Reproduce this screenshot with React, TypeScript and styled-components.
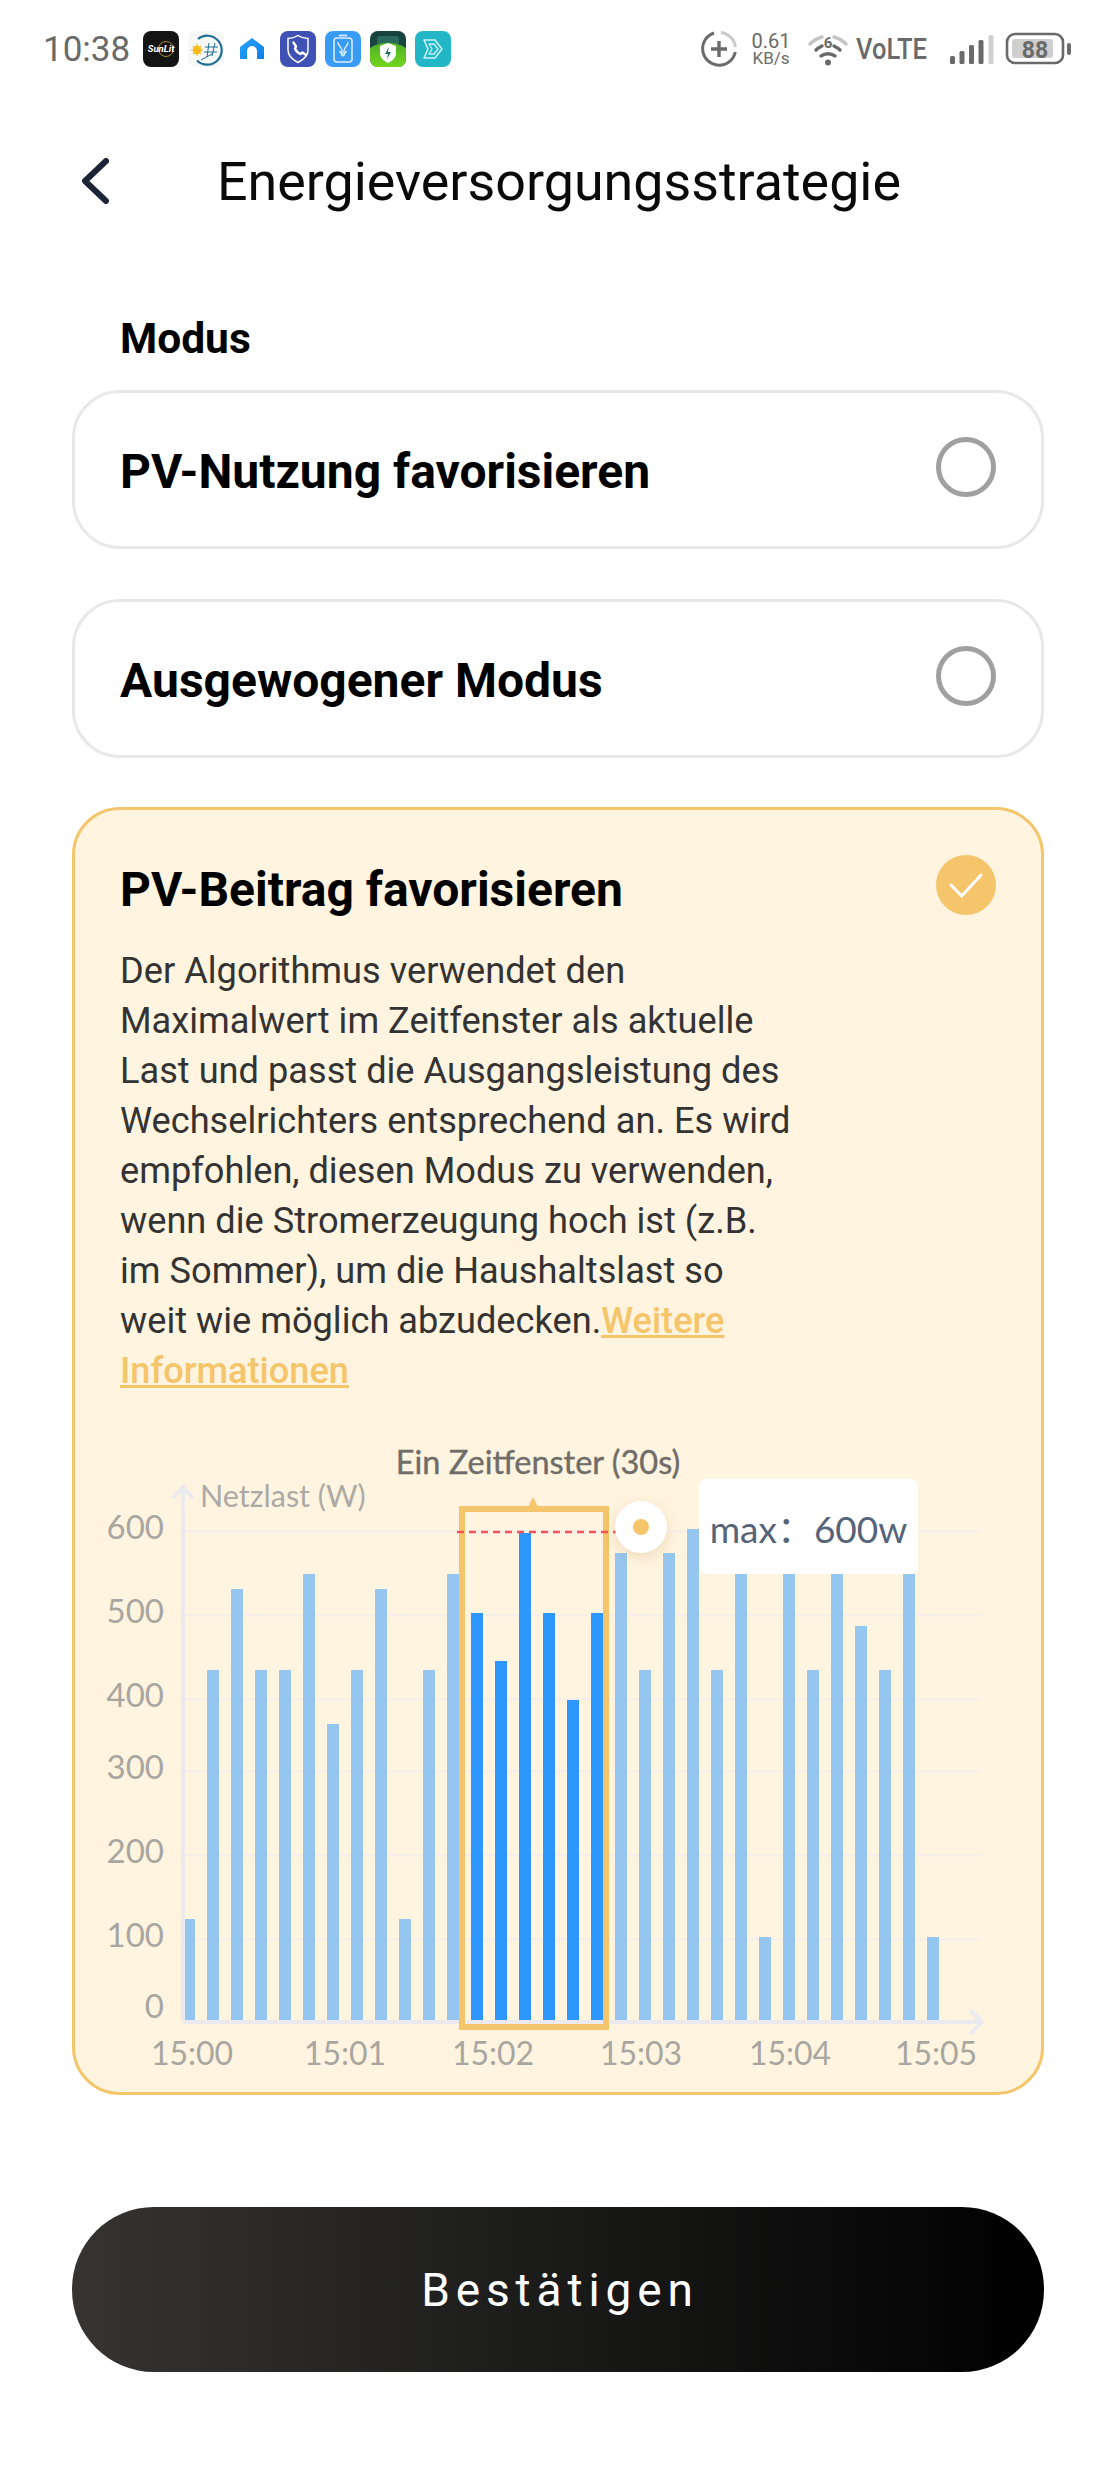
import React from 'react';
import styled, { createGlobalStyle } from 'styled-components';

const GlobalStyle = createGlobalStyle`
  html, body {
    margin: 0;
    padding: 0;
    background: #fff;
    font-family: Roboto, "Liberation Sans", sans-serif;
  }
`

const Page = styled.div`
  width: 1116px;
  height: 2480px;
  background: #fff;
  overflow: hidden;
`

const StatusBar = styled.div`
  display: flex;
  align-items: center;
  justify-content: space-between;
  height: 98px;
  padding: 0 45px 0 43px;
  color: #6a6a6a;
`

const StatusGroup = styled.div`
  display: flex;
  align-items: center;
`

const Clock = styled.span`
  font-size: 35px;
  width: 100px;
`

const AppIcons = styled.div`
  display: flex;
  align-items: center;
  gap: 9px;
`

const NetSpeed = styled.div`
  display: flex;
  flex-direction: column;
  align-items: center;
  width: 40px;
  margin: 0 17px 0 13px;
  font-size: 20px;
  line-height: 18px;
  & small {
    font-size: 17px;
    line-height: 17px;
  }
`

const Volte = styled.span`
  font-size: 29px;
  font-weight: 500;
  margin: 0 24px 0 8px;
  transform: scaleX(.88);
  transform-origin: left center;
  width: 70px;
`

const BatterySlot = styled.div`
  display: flex;
  margin-left: 11px;
`

const Header = styled.div`
  display: flex;
  align-items: center;
  height: 86px;
  padding: 0 0 0 81px;
  margin: 40px 0 90px;
`

const HeaderTitle = styled.h1`
  margin: 0 0 0 108px;
  font-size: 53.8px;
  font-weight: 400;
  color: #0a0a0a;
`

const Section = styled.div`
  display: flex;
  flex-direction: column;
  width: 972px;
  margin-left: 72px;
`

const SectionLabel = styled.div`
  margin: 0 0 26px 48px;
  font-size: 42.5px;
  line-height: 50px;
  font-weight: 700;
  color: #000;
`

const Card = styled.div<{ $active?: boolean }>`
  box-sizing: border-box;
  display: flex;
  flex-direction: column;
  border: 3px solid ${props => props.$active ? '#f5c56b' : '#e8e8e8'};
  border-radius: 48px;
  background: ${props => props.$active ? '#fff4df' : '#fff'};
  margin-bottom: 49.5px;
  padding: 0 45px;
  min-height: 159px;
  ${props => props.$active && 'height: 1288px; margin-bottom: 112px;'}
`

const CardHead = styled.div<{ $active?: boolean }>`
  display: flex;
  flex-shrink: 0;
  align-items: center;
  justify-content: space-between;
  height: ${props => props.$active ? '155px' : '153px'};
  & > span {
    font-size: 48px;
    font-weight: 700;
    color: #000;
    padding-top: 4px;
  }
`

const Radio = styled.div`
  box-sizing: border-box;
  width: 60px;
  height: 60px;
  margin-bottom: 5px;
  border: 5px solid #a0a0a0;
  border-radius: 50%;
`

const CheckSvg = styled.svg`
  margin-bottom: 5px;
`

const Description = styled.p`
  flex-shrink: 0;
  margin: -19px 0 0 0;
  font-size: 36.2px;
  line-height: 50px;
  color: #333;
  & a {
    color: #f5c56b;
    font-weight: 500;
    text-decoration: underline;
  }
`

const ChartWrap = styled.div`
  position: relative;
  flex-shrink: 0;
  width: 972px;
  height: 652px;
  margin: 44px 0 0 -48px;
`

const Tooltip = styled.div`
  position: absolute;
  left: 627px;
  top: 39px;
  box-sizing: border-box;
  width: 219px;
  height: 95px;
  display: flex;
  align-items: center;
  justify-content: center;
  background: #fff;
  border-radius: 8px;
  font-family: Lato, "Noto Sans CJK SC", sans-serif;
  font-size: 37px;
  color: #56647a;
  white-space: pre;
`

const Marker = styled.div`
  position: absolute;
  left: 543px;
  top: 61px;
  width: 52px;
  height: 52px;
  display: flex;
  align-items: center;
  justify-content: center;
  border-radius: 50%;
  background: #fff;
  box-shadow: 0 4px 14px rgba(170, 130, 60, .22);
  &::after {
    content: "";
    width: 16px;
    height: 16px;
    border-radius: 50%;
    background: #f5c56b;
  }
`

const ConfirmButton = styled.button`
  width: 972px;
  height: 165px;
  margin-left: 72px;
  padding: 0 0 0 4px;
  border: none;
  border-radius: 82px;
  background: linear-gradient(90deg, #353433 0%, #000 100%);
  color: #fff;
  font-family: inherit;
  font-size: 46px;
  letter-spacing: 5.9px;
`

const HomeSvg = styled.svg`
  margin: 0 7px;
`

const BackIcon = () => (
  <svg width="28" height="46" viewBox="0 0 28 46">
    <path d="M25 3 L4 23 L25 43" fill="none" stroke="#1c2538" strokeWidth="6" strokeLinecap="round" strokeLinejoin="round" />
  </svg>
)

const CheckedRadio = () => (
  <CheckSvg width="60" height="60" viewBox="0 0 60 60">
    <circle cx="30" cy="30" r="30" fill="#f5c56b" />
    <path d="M15 30 L25.7 41 L45 20" fill="none" stroke="#fff" strokeWidth="3" strokeLinecap="round" strokeLinejoin="round" />
  </CheckSvg>
)

const SunlitIcon = () => (
  <svg width="36" height="36" viewBox="0 0 36 36">
    <rect width="36" height="36" rx="8" fill="#141414" />
    <circle cx="23" cy="18" r="7.5" fill="none" stroke="#d8a63a" strokeWidth=".8" />
    <text x="18" y="21" fontSize="9.5" fontStyle="italic" fontWeight="700" fill="#fff" textAnchor="middle" fontFamily="Roboto, sans-serif">SunLit</text>
  </svg>
)

const SolarIcon = () => (
  <svg width="36" height="36" viewBox="0 0 36 36">
    <rect width="36" height="36" rx="8" fill="#f6f7f7" />
    <path d="M10 8 A 14.5 14.5 0 1 1 9 29.5" fill="none" stroke="#1f6f95" strokeWidth="2.2" />
    <circle cx="9" cy="19" r="4.2" fill="#f7b91d" />
    <path d="M9 13 V25 M3 19 H15 M5 15 L13 23 M13 15 L5 23" stroke="#f7b91d" strokeWidth="1.2" />
    <path d="M21 12 L19 26 M27 12 L24 25 M17 16 H30 M16 21 H29 M13 29 L24 23" fill="none" stroke="#1f6f95" strokeWidth="1" />
  </svg>
)

const HomeIcon = () => (
  <HomeSvg width="24" height="22" viewBox="0 0 24 22">
    <defs>
      <linearGradient id="homeGrad" x1="0" y1="0" x2="1" y2="1">
        <stop offset="0" stopColor="#2aa4ff" />
        <stop offset="1" stopColor="#0d7fe8" />
      </linearGradient>
    </defs>
    <path d="M0 21 V9 L12 0 L24 9 V21 H17 V13 A5 5 0 0 0 7 13 V21 Z" fill="url(#homeGrad)" />
  </HomeSvg>
)

const PhoneShieldIcon = () => (
  <svg width="36" height="36" viewBox="0 0 36 36">
    <rect width="36" height="36" rx="8" fill="#3f51b5" />
    <path d="M8 7.5 C12 7.5 15 6.5 18 4.5 C21 6.5 24 7.5 28 7.5 V19 C28 25 23 29 18 31.5 C13 29 8 25 8 19 Z" fill="none" stroke="#fff" strokeWidth="1.5" />
    <path d="M13.5 11.5 L16 15.5 L15 17.5 C16 20 18 22 20.5 23 L22.5 21.5 L26 24" fill="none" stroke="#fff" strokeWidth="2.4" strokeLinecap="round" strokeLinejoin="round" />
  </svg>
)

const BatteryAppIcon = () => (
  <svg width="36" height="36" viewBox="0 0 36 36">
    <rect width="36" height="36" rx="8" fill="#3a9bf5" />
    <rect x="9" y="7" width="18" height="24" rx="3" fill="none" stroke="#d8ecff" strokeWidth="1.6" />
    <path d="M14 4.5 H22" stroke="#d8ecff" strokeWidth="1.8" />
    <path d="M13 11 C13 16 17 15 17 20 V25 M23 11 C23 16 19 15 19 20 V25 M14.5 20 L18 25 L21.5 20" fill="none" stroke="#d8ecff" strokeWidth="1.4" strokeLinejoin="round" />
  </svg>
)

const GuardIcon = () => (
  <svg width="36" height="36" viewBox="0 0 36 36">
    <defs>
      <clipPath id="guardClip"><rect width="36" height="36" rx="8" /></clipPath>
      <linearGradient id="guardHill" x1="0" y1="0" x2="0" y2="1">
        <stop offset="0" stopColor="#4fae28" />
        <stop offset="1" stopColor="#74d81c" />
      </linearGradient>
    </defs>
    <g clipPath="url(#guardClip)">
      <rect width="36" height="36" fill="#17443f" />
      <rect x="7" y="5" width="22" height="10" rx="3" fill="#2a6a5c" />
      <path d="M0 17 C 10 10, 26 10, 36 17 V36 H0 Z" fill="url(#guardHill)" />
      <path d="M18 12 L26 15 V22 C26 27 22 30 18 32 C14 30 10 27 10 22 V15 Z" fill="#fff" />
      <path d="M19 16 L15 23 H18 L17 28 L21 21 H18 Z" fill="#2a6a5c" />
    </g>
  </svg>
)

const TealIcon = () => (
  <svg width="36" height="36" viewBox="0 0 36 36">
    <rect width="36" height="36" rx="8" fill="#22b6c6" />
    <path d="M9 9 H20 L27 18 L20 27 H9 L13 18 Z" fill="none" stroke="#c9f4f6" strokeWidth="1.6" strokeLinejoin="round" />
    <path d="M14 13 H19 L23 18 L19 23 H14 L17 18 Z" fill="none" stroke="#c9f4f6" strokeWidth="1.3" strokeLinejoin="round" />
  </svg>
)

const DataSaverIcon = () => (
  <svg width="38" height="38" viewBox="0 0 38 38">
    <path d="M14 3 A16.5 16.5 0 1 0 35.3 22" fill="none" stroke="#6a6a6a" strokeWidth="3" />
    <path d="M21 2.6 A16.5 16.5 0 0 1 35.4 17" fill="none" stroke="#c9c9c9" strokeWidth="3" />
    <path d="M19 11 V27 M11 19 H27" stroke="#6a6a6a" strokeWidth="3.4" />
  </svg>
)

const WifiIcon = () => (
  <svg width="40" height="33" viewBox="0 0 40 33">
    <path d="M2 11 C6 7 10 5 14 4 M38 11 C34 7 30 5 26 4" fill="none" stroke="#c4c4c4" strokeWidth="3.4" strokeLinecap="round" />
    <path d="M8 17 C10 15 12 14 14 13 M32 17 C30 15 28 14 26 13" fill="none" stroke="#6a6a6a" strokeWidth="3.4" strokeLinecap="round" />
    <path d="M13 23 C17 20 23 20 27 23" fill="none" stroke="#6a6a6a" strokeWidth="3.4" strokeLinecap="round" />
    <circle cx="20" cy="29.5" r="3" fill="#6a6a6a" />
    <text x="20" y="15" fontSize="15" fontWeight="700" fill="#6a6a6a" textAnchor="middle" fontFamily="Roboto, sans-serif">6</text>
  </svg>
)

const SignalIcon = () => (
  <svg width="44" height="30" viewBox="0 0 44 30">
    <rect x="0" y="22" width="5" height="8" rx="1.5" fill="#6a6a6a" />
    <rect x="9.5" y="17" width="5" height="13" rx="1.5" fill="#6a6a6a" />
    <rect x="19" y="11" width="5" height="19" rx="1.5" fill="#6a6a6a" />
    <rect x="28.5" y="6" width="5" height="24" rx="1.5" fill="#6a6a6a" />
    <rect x="38.5" y="1" width="5" height="29" rx="1.5" fill="#d0d0d0" />
  </svg>
)

const BatteryIcon = () => (
  <svg width="66" height="34" viewBox="0 0 66 34">
    <rect x="2" y="2" width="56" height="29" rx="8" fill="none" stroke="#6a6a6a" strokeWidth="2.6" />
    <rect x="7" y="7" width="41" height="19" rx="3" fill="#cfcfcf" />
    <text x="30" y="25.5" fontSize="23" fontWeight="700" fill="#6a6a6a" textAnchor="middle" fontFamily="Roboto, sans-serif">88</text>
    <rect x="62" y="11" width="4" height="12" rx="2" fill="#6a6a6a" />
  </svg>
)

// x of the first bar is 185, the rest sit on a 24px step starting at 207
const barTops = [
  1919, 1670, 1589, 1670, 1670, 1574, 1724, 1670, 1589, 1919, 1670, 1574,
  1613, 1661, 1533, 1613, 1700, 1613,
  1553, 1670, 1553, 1529, 1670, 1574, 1937, 1574, 1670, 1574, 1626, 1670, 1574, 1937,
]
const gridLines = [1531, 1615, 1699, 1771, 1855, 1939]
const yLabels = [
  { text: '600', y: 1527 },
  { text: '500', y: 1611 },
  { text: '400', y: 1695 },
  { text: '300', y: 1767 },
  { text: '200', y: 1851 },
  { text: '100', y: 1935 },
  { text: '0', y: 2006 },
]
const xLabels = [
  { text: '15:00', x: 192 },
  { text: '15:01', x: 345 },
  { text: '15:02', x: 493 },
  { text: '15:03', x: 641 },
  { text: '15:04', x: 790 },
  { text: '15:05', x: 936 },
]

const LOAD_CHART_X = 72
const LOAD_CHART_Y = 1440

const LoadChart = () => (
  <svg
    width="972"
    height="652"
    viewBox={`${LOAD_CHART_X} ${LOAD_CHART_Y} 972 652`}
    fontFamily="Lato, Roboto, sans-serif"
  >
    <text x="538" y="1474" fontSize="32.5" fill="#6f6d69" stroke="#6f6d69" strokeWidth=".4" textAnchor="middle">Ein Zeitfenster (30s)</text>
    <text x="200" y="1507" fontSize="30.5" fill="#acaaa6">Netzlast (W)</text>
    {gridLines.map(y => <rect key={y} x="185" y={y - 1} width="796" height="2.5" fill="#f6efe9" />)}
    {yLabels.map(l => (
      <text key={l.text} x="164" y={l.y + 12} fontSize="33" fill="#a8a6a1" textAnchor="end">{l.text}</text>
    ))}
    {barTops.map((top, i) => {
      const x = i === 0 ? 185 : 207 + (i - 1) * 24
      const w = i === 0 ? 10 : 12
      const inWindow = i >= 12 && i <= 17
      return <rect key={i} x={x} y={top} width={w} height={2021 - top} fill={inWindow ? '#2e96ff' : '#95c6ef'} />
    })}
    <path d="M183 2022 V1488 M173 1498 L183 1487 L193 1498" fill="none" stroke="#ebeaee" strokeWidth="4" />
    <path d="M183 2022 H981 M970 2010 L982 2022 L970 2034" fill="none" stroke="#ebeaee" strokeWidth="4" />
    <rect x="462" y="1509" width="144" height="518" fill="none" stroke="#f5c56b" strokeWidth="6" />
    <path d="M528 1507 L533 1497 L538 1507 Z" fill="#f5c56b" />
    <path d="M457 1532 H618" stroke="#f4525a" strokeWidth="2.6" strokeDasharray="7 5" />
    {xLabels.map(l => (
      <text key={l.text} x={l.x} y="2065" fontSize="32" fill="#a8a6a1" textAnchor="middle">{l.text}</text>
    ))}
  </svg>
)

const App = () => (
  <Page>
    <GlobalStyle />
    <StatusBar>
      <StatusGroup>
        <Clock>10:38</Clock>
        <AppIcons>
          <SunlitIcon />
          <SolarIcon />
          <HomeIcon />
          <PhoneShieldIcon />
          <BatteryAppIcon />
          <GuardIcon />
          <TealIcon />
        </AppIcons>
      </StatusGroup>
      <StatusGroup>
        <DataSaverIcon />
        <NetSpeed>
          <span>0.61</span>
          <small>KB/s</small>
        </NetSpeed>
        <WifiIcon />
        <Volte>VoLTE</Volte>
        <SignalIcon />
        <BatterySlot>
          <BatteryIcon />
        </BatterySlot>
      </StatusGroup>
    </StatusBar>
    <Header>
      <BackIcon />
      <HeaderTitle>Energieversorgungsstrategie</HeaderTitle>
    </Header>
    <Section>
      <SectionLabel>Modus</SectionLabel>
      <Card>
        <CardHead>
          <span>PV-Nutzung favorisieren</span>
          <Radio />
        </CardHead>
      </Card>
      <Card>
        <CardHead>
          <span>Ausgewogener Modus</span>
          <Radio />
        </CardHead>
      </Card>
      <Card $active>
        <CardHead $active>
          <span>PV-Beitrag favorisieren</span>
          <CheckedRadio />
        </CardHead>
        <Description>
          Der Algorithmus verwendet den<br />
          Maximalwert im Zeitfenster als aktuelle<br />
          Last und passt die Ausgangsleistung des<br />
          Wechselrichters entsprechend an. Es wird<br />
          empfohlen, diesen Modus zu verwenden,<br />
          wenn die Stromerzeugung hoch ist (z.B.<br />
          im Sommer), um die Haushaltslast so<br />
          weit wie möglich abzudecken.<a>Weitere<br />Informationen</a>
        </Description>
        <ChartWrap>
          <LoadChart />
          <Marker />
          <Tooltip>max：600w</Tooltip>
        </ChartWrap>
      </Card>
    </Section>
    <ConfirmButton>Bestätigen</ConfirmButton>
  </Page>
);

export default App;
